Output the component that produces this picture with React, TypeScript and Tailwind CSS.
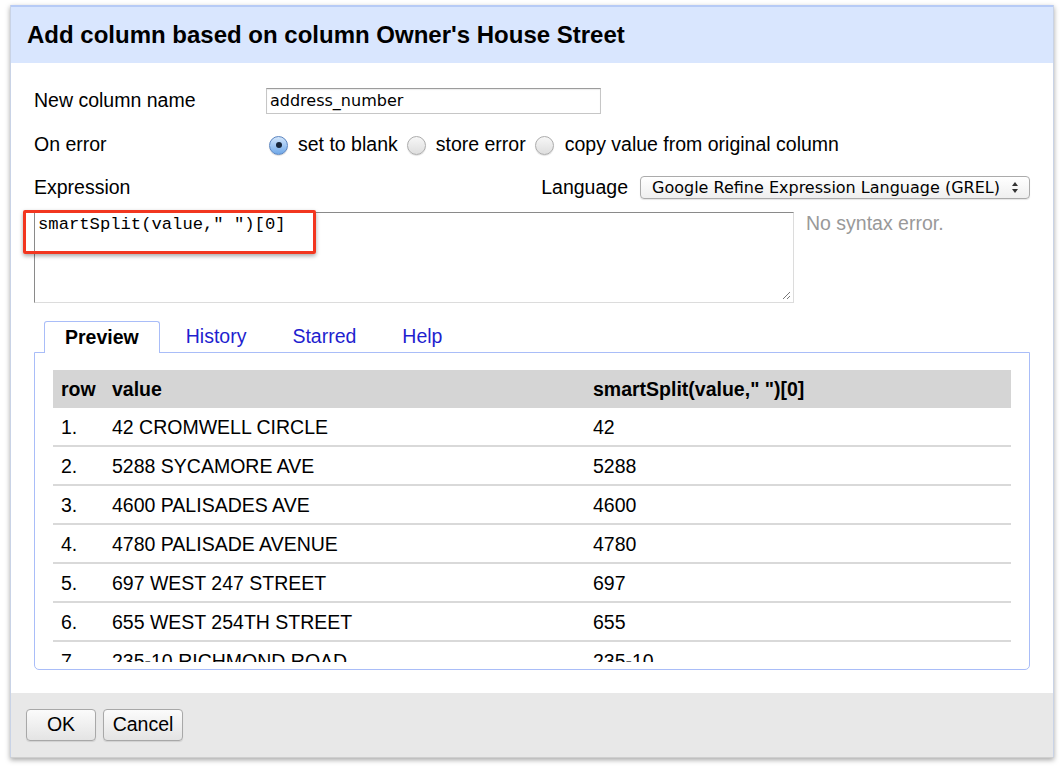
import React from "react"

const rows = [
  ["1.", "42 CROMWELL CIRCLE", "42"],
  ["2.", "5288 SYCAMORE AVE", "5288"],
  ["3.", "4600 PALISADES AVE", "4600"],
  ["4.", "4780 PALISADE AVENUE", "4780"],
  ["5.", "697 WEST 247 STREET", "697"],
  ["6.", "655 WEST 254TH STREET", "655"],
  ["7.", "235-10 RICHMOND ROAD", "235-10"],
]

// mac-style radio button
function Radio({ checked = false }: { checked?: boolean }) {
  if (checked) {
    return (
      <span className="flex h-[19px] w-[19px] shrink-0 items-center justify-center rounded-full border border-[#5b85c0] bg-linear-to-b from-[#d3e6fb] to-[#6fa8e8] shadow-[0_1px_1px_rgba(0,0,0,0.15)]">
        <span className="h-[6px] w-[6px] rounded-full bg-[#17263b]" />
      </span>
    )
  }
  return (
    <span className="block h-[19px] w-[19px] shrink-0 rounded-full border border-[#acacac] bg-linear-to-b from-[#f7f7f7] to-[#dedede] shadow-[0_1px_1px_rgba(0,0,0,0.12)]" />
  )
}

export default function App() {
  return (
    <div className="min-h-screen bg-white pl-[10px] pt-[5px] font-['Liberation_Sans',Arial,sans-serif] text-[19.5px] text-black">
      <div className="flex w-[1044px] flex-col border-x border-b border-x-[#c9d3e6] border-b-[#cfcfcf] shadow-[0_2px_5px_rgba(0,0,0,0.35)]">
        {/* Header */}
        <div className="flex h-[58px] items-center border-t-2 border-[#b7cbf6] bg-[#d9e6fe] pl-[16px]">
          <h1 className="text-[24px] font-bold leading-none">Add column based on column Owner's House Street</h1>
        </div>

        {/* Body */}
        <div className="h-[630px] bg-white px-[23px] pt-[25px]">
          <div className="flex h-[26px] items-center">
            <div className="w-[232px]">New column name</div>
            <div className="flex h-[26px] w-[335px] items-center border border-[#c6c6c6] border-t-[#9c9c9c] pl-[3px] font-['DejaVu_Sans',sans-serif] text-[16px] shadow-[inset_0_1px_1px_rgba(0,0,0,0.08)]">
              address_number
            </div>
          </div>

          <div className="mt-[18px] flex h-[26px] items-center">
            <div className="w-[232px]">On error</div>
            <div className="flex items-center">
              <div className="ml-[3px]">
                <Radio checked />
              </div>
              <span className="ml-[10px]">set to blank</span>
              <div className="ml-[9px]">
                <Radio />
              </div>
              <span className="ml-[10px]">store error</span>
              <div className="ml-[9px]">
                <Radio />
              </div>
              <span className="ml-[11px]">copy value from original column</span>
            </div>
          </div>

          <div className="mt-[17px] flex h-[25px] items-center justify-between">
            <div>Expression</div>
            <div className="flex items-center">
              <span>Language</span>
              <div className="ml-[12px] flex h-[23px] w-[390px] items-center justify-between rounded-[4px] border border-[#ababab] bg-linear-to-b from-white to-[#efefef] pl-[11px] pr-[10px] font-['DejaVu_Sans',sans-serif] text-[16px] shadow-[0_1px_1px_rgba(0,0,0,0.1)]">
                <span>Google Refine Expression Language (GREL)</span>
                <svg width="8" height="13" viewBox="0 0 8 13">
                  <path d="M4 1 L7 5 H1 Z" fill="#333" />
                  <path d="M4 12 L7 8 H1 Z" fill="#333" />
                </svg>
              </div>
            </div>
          </div>

          <div className="mt-[12px] flex items-start">
            <div className="relative h-[91px] w-[760px] border border-[#dcdcdc] border-l-[#8a8a8a] border-t-[#8a8a8a]">
              <div className="pl-[3px] pt-[2px] font-['Liberation_Mono',monospace] text-[17.2px] leading-[20px]">
                smartSplit(value," ")[0]
              </div>
              <svg className="absolute bottom-[2px] right-[2px]" width="9" height="9" viewBox="0 0 9 9">
                <path d="M1 8 L8 1 M5 8 L8 5" stroke="#777" strokeWidth="1" />
              </svg>
              {/* red highlight */}
              <div className="absolute left-[-12px] top-[-3px] h-[44px] w-[293px] rounded-[2px] border-[3px] border-[#f2361f] shadow-[0_2px_4px_rgba(0,0,0,0.35)]" />
            </div>
            <div className="ml-[12px] mt-[-3px] text-[#999]">No syntax error.</div>
          </div>

          {/* Tabs */}
          <div className="mt-[18px] flex pl-[10px]">
            <div className="relative z-10 mb-[-1px] flex h-[32px] items-center rounded-t-[3px] border border-b-0 border-[#a9bdf8] bg-white pl-[20px] pr-[20px] font-bold">
              Preview
            </div>
            <div className="ml-[5px] flex h-[31px] items-center px-[21px] text-[#1f1fcf]">History</div>
            <div className="ml-[4px] flex h-[31px] items-center px-[21px] text-[#1f1fcf]">Starred</div>
            <div className="ml-[4px] flex h-[31px] items-center px-[21px] text-[#1f1fcf]">Help</div>
          </div>
          <div className="h-[318px] rounded-b-[5px] border border-[#a9bdf8] px-[18px] pb-[5px] pt-[17px]">
            <div className="h-[292px] overflow-hidden">
              <div className="grid h-[38px] grid-cols-[51px_481px_1fr] items-center bg-[#d5d5d5] pt-[1px] font-bold">
                <div className="pl-[8px]">row</div>
                <div className="pl-[8px]">value</div>
                <div className="pl-[8px]">smartSplit(value," ")[0]</div>
              </div>
              {rows.map((r) => (
                <div key={r[0]} className="grid h-[39px] grid-cols-[51px_481px_1fr] items-center border-b-2 border-[#d9d9d9] pt-[3px]">
                  <div className="pl-[8px]">{r[0]}</div>
                  <div className="pl-[8px]">{r[1]}</div>
                  <div className="pl-[8px]">{r[2]}</div>
                </div>
              ))}
            </div>
          </div>
        </div>

        {/* Footer */}
        <div className="flex h-[64px] items-start gap-[7px] bg-[#e8e8e8] pl-[15px] pt-[16px]">
          <button className="h-[32px] w-[70px] rounded-[4px] border border-[#a8a8a8] bg-linear-to-b from-[#fbfbfb] to-[#e4e4e4] shadow-[0_1px_1px_rgba(0,0,0,0.1)]">
            OK
          </button>
          <button className="h-[32px] w-[80px] rounded-[4px] border border-[#a8a8a8] bg-linear-to-b from-[#fbfbfb] to-[#e4e4e4] shadow-[0_1px_1px_rgba(0,0,0,0.1)]">
            Cancel
          </button>
        </div>
      </div>
    </div>
  )
}
